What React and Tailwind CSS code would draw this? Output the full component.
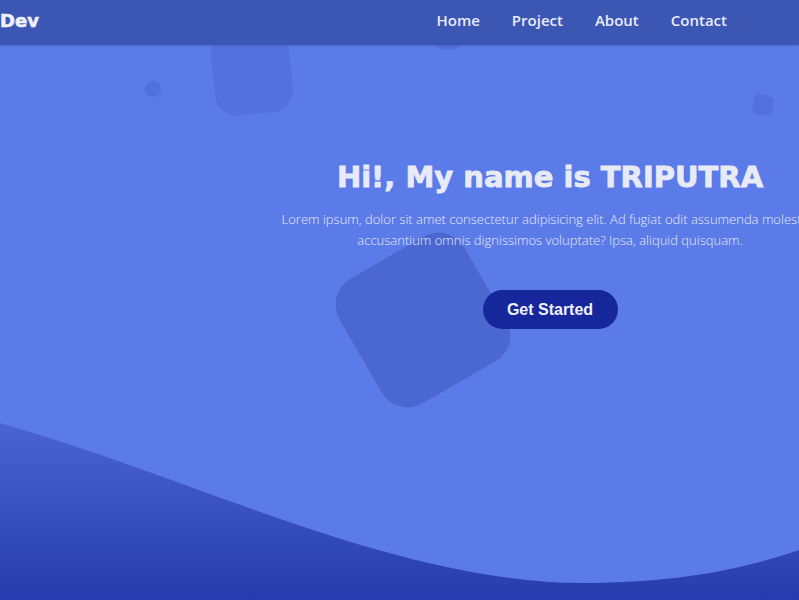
import React from "react";

const links = ["Home", "Project", "About", "Contact"];

const App = () => {
  return (
    <div className="relative h-[600px] w-full overflow-hidden bg-[#5b7be9]">
      {/* floating shapes */}
      <div className="absolute left-[213px] top-[30px] h-[84px] w-[78px] rotate-[-6deg] rounded-[22px] bg-[#5372e0]" />
      <div className="absolute left-[145px] top-[81px] h-[16px] w-[16px] rounded-full bg-[#5070dc]" />
      <div className="absolute left-[430px] top-[14px] h-[36px] w-[36px] rounded-full bg-[#5070dc]" />
      <div className="absolute left-[753px] top-[95px] h-[20px] w-[20px] rotate-[10deg] rounded-[6px] bg-[#5271de]" />
      <div className="absolute left-[351px] top-[248px] h-[144px] w-[144px] rotate-[-30deg] rounded-[30px] bg-[#4b68d0]" />

      {/* wave */}
      <svg
        className="absolute bottom-0 left-0"
        width="799"
        height="180"
        viewBox="0 420 799 180"
      >
        <defs>
          <linearGradient id="wave" x1="0" y1="0" x2="0" y2="1">
            <stop offset="0" stopColor="#4c64d2" />
            <stop offset="1" stopColor="#263cae" />
          </linearGradient>
        </defs>
        <path
          d="M0 423 C 200 480, 400 585, 590 583 C 680 582, 740 570, 799 550 L 799 600 L 0 600 Z"
          fill="url(#wave)"
        />
      </svg>

      {/* navbar */}
      <nav className="relative z-10 flex h-[45px] items-center justify-between bg-[#3c56b4] pb-[4px] pr-[72px] shadow-sm">
        <span className="font-['DejaVu_Sans',sans-serif] text-[18px] font-bold text-[#eef0fa] [-webkit-text-stroke:0.6px_#eef0fa]">
          Dev
        </span>
        <ul className="flex gap-[32px] font-['Open_Sans',sans-serif] text-[15px] font-semibold text-[#e9ecf8]">
          {links.map((l) => (
            <li key={l}>{l}</li>
          ))}
        </ul>
      </nav>

      {/* hero */}
      <section className="relative z-10 ml-[282px] flex w-[536px] flex-col items-center pt-[112px] text-center">
        <h1 className="font-['DejaVu_Sans',sans-serif] text-[29px] font-bold leading-[40px] text-[#e8ebf7] [-webkit-text-stroke:0.8px_#e8ebf7]">
          Hi!, My name is TRIPUTRA
        </h1>
        <p className="mt-[12px] whitespace-nowrap font-['Open_Sans',sans-serif] text-[13px] font-light leading-[21px] text-[#e6eaf8]">
          Lorem ipsum, dolor sit amet consectetur adipisicing elit. Ad fugiat
          odit assumenda molestiae
          <br />
          accusantium omnis dignissimos voluptate? Ipsa, aliquid quisquam.
        </p>
        <button className="mt-[39px] h-[39px] w-[135px] rounded-full bg-[#16269b] font-['Liberation_Sans',sans-serif] text-[16px] font-bold text-[#eef0fb]">
          Get Started
        </button>
      </section>
    </div>
  );
};

export default App;
